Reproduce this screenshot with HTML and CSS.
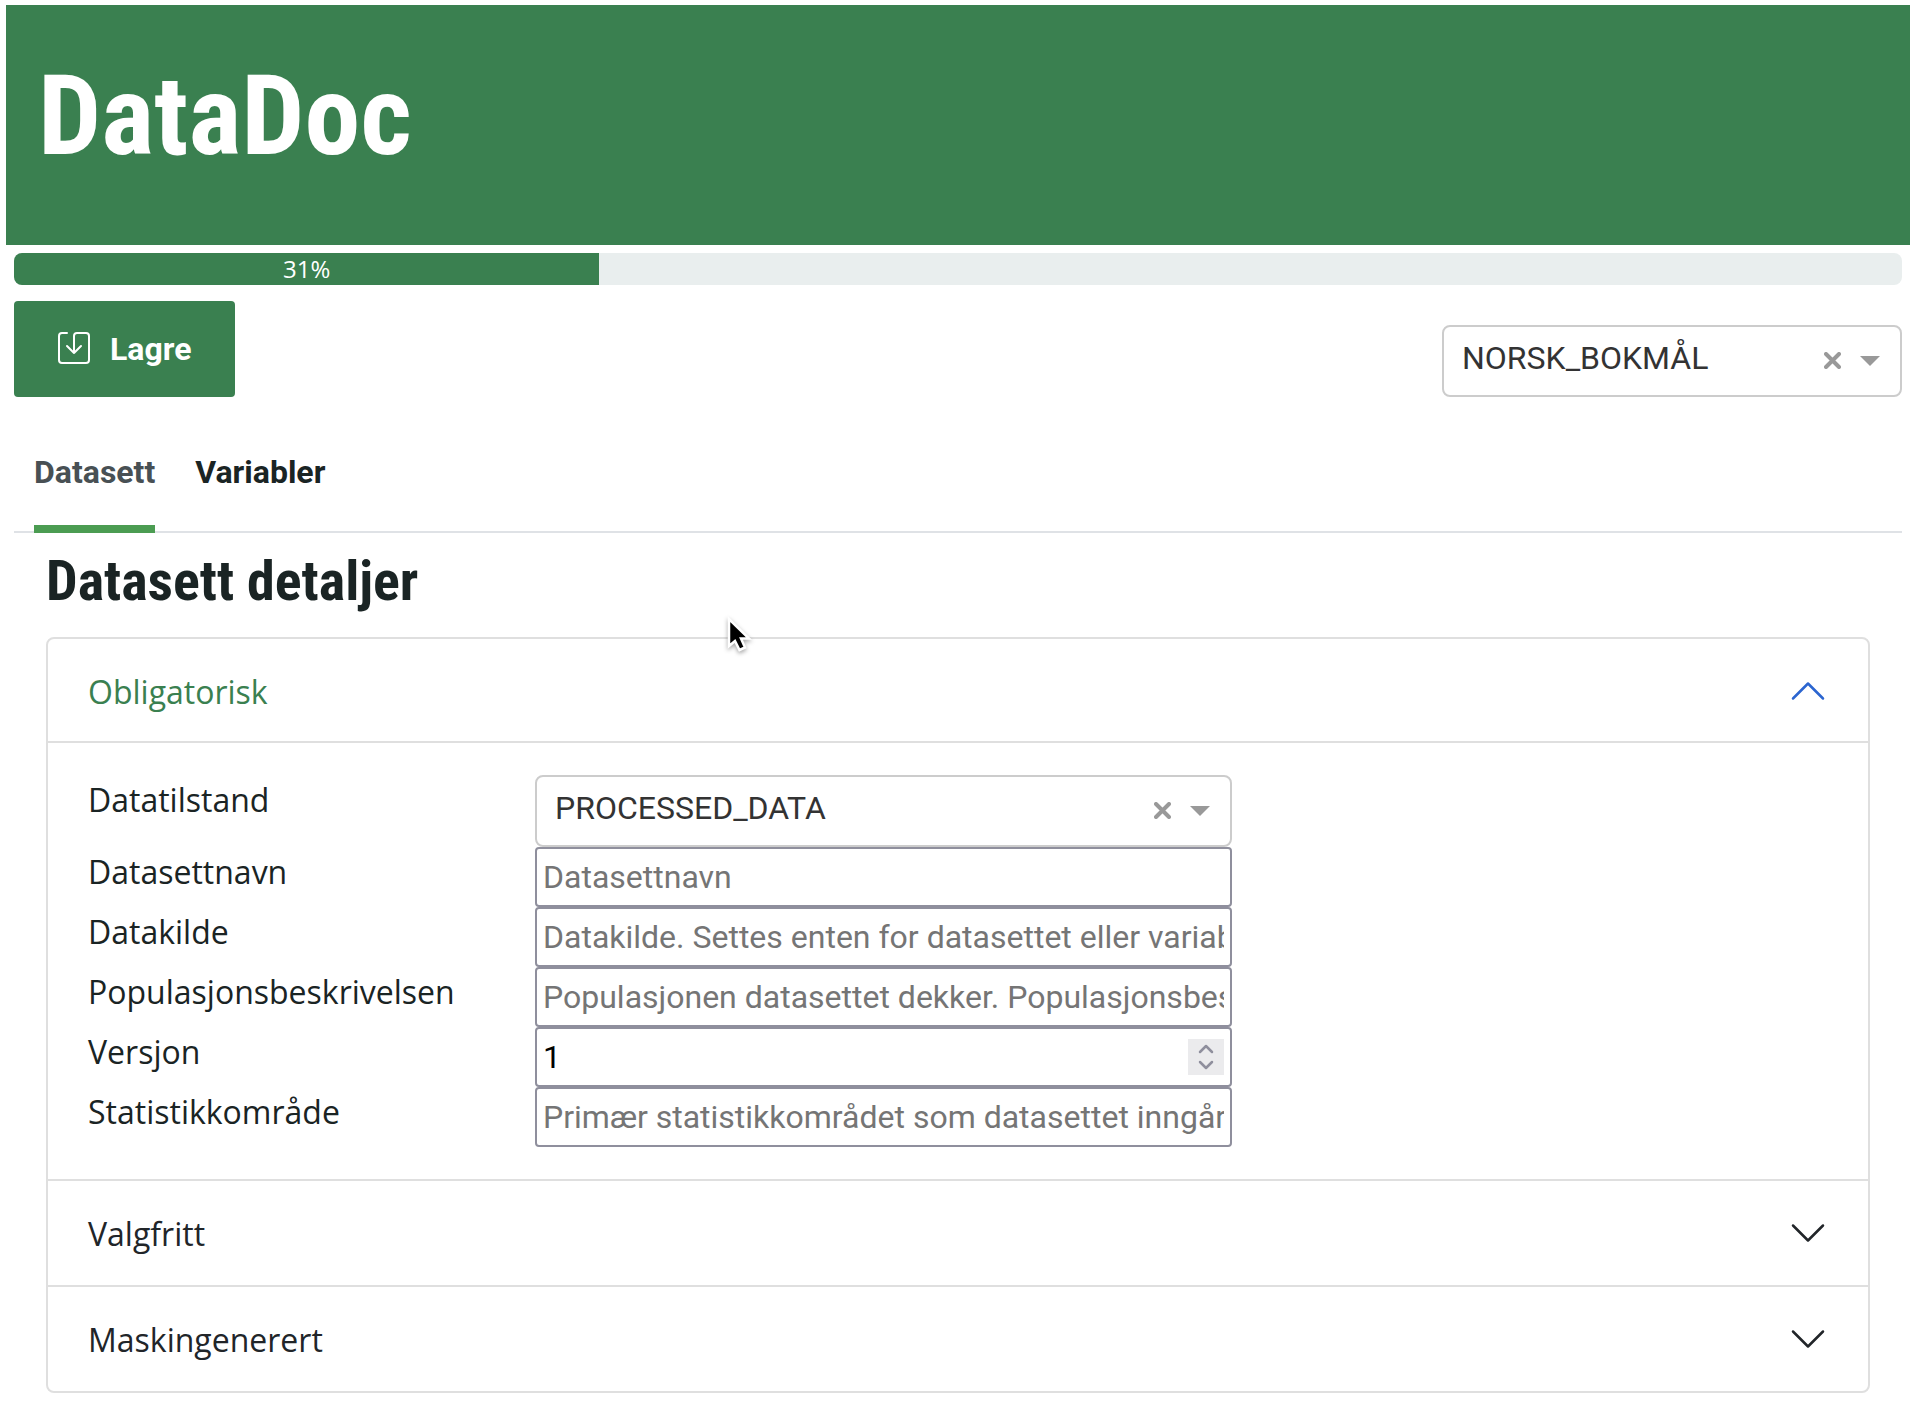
FILE: index.html
```html
<!DOCTYPE html>
<html lang="nb">
<head>
<meta charset="utf-8">
<title>DataDoc</title>
<link rel="stylesheet" href="styles.css">
</head>
<body>
<header class="banner"><h1 class="banner-title">DataDoc</h1></header>
<main class="content">
  <div class="progress"><div class="progress-bar" style="width: 31%">31%</div></div>

  <div class="toolbar">
    <button class="save" type="button">
      <svg class="save-icon" viewBox="0 0 32 32" fill="none" stroke="currentColor" stroke-width="2" stroke-linecap="round" stroke-linejoin="round"><path d="M9 1H4a3 3 0 0 0-3 3v24a3 3 0 0 0 3 3h24a3 3 0 0 0 3-3V4a3 3 0 0 0-3-3h-9a3 3 0 0 0-3 3v17M9 14l7 7 7-7"/></svg>
      <span>Lagre</span>
    </button>
    <div class="select language">
      <span class="select-value">NORSK_BOKMÅL</span>
      <svg class="clear" viewBox="0 0 17 17"><path d="M2 2l13 13M15 2L2 15"/></svg>
      <span class="caret"></span>
    </div>
  </div>

  <nav class="tabs">
    <a class="tab active">Datasett</a>
    <a class="tab">Variabler</a>
  </nav>

  <section class="details">
    <h2 class="details-title">Datasett detaljer</h2>
    <div class="accordion">
      <div class="item">
        <div class="item-head open"><span>Obligatorisk</span>
          <svg class="chevron" viewBox="0 0 16 16"><path d="M2 11l6-6 6 6"/></svg></div>
        <div class="item-body">
          <div class="row"><label class="label">Datatilstand</label>
            <div class="select field">
              <span class="select-value">PROCESSED_DATA</span>
              <svg class="clear" viewBox="0 0 17 17"><path d="M2 2l13 13M15 2L2 15"/></svg>
              <span class="caret"></span>
            </div></div>
          <div class="row"><label class="label">Datasettnavn</label>
            <input class="input field" type="text" placeholder="Datasettnavn"></div>
          <div class="row"><label class="label">Datakilde</label>
            <input class="input field" type="text" placeholder="Datakilde. Settes enten for datasettet eller variabelforekomst."></div>
          <div class="row"><label class="label">Populasjonsbeskrivelsen</label>
            <input class="input field" type="text" placeholder="Populasjonen datasettet dekker. Populasjonsbeskrivelsen"></div>
          <div class="row"><label class="label">Versjon</label>
            <div class="input field number"><span>1</span>
              <svg class="spinner" viewBox="0 0 36 36"><path d="M12 13l6-6 6 6M12 23l6 6 6-6"/></svg></div></div>
          <div class="row"><label class="label">Statistikkområde</label>
            <input class="input field" type="text" placeholder="Primær statistikkområdet som datasettet inngår i"></div>
        </div>
      </div>
      <div class="item">
        <div class="item-head"><span>Valgfritt</span>
          <svg class="chevron" viewBox="0 0 16 16"><path d="M2 5l6 6 6-6"/></svg></div>
      </div>
      <div class="item">
        <div class="item-head"><span>Maskingenerert</span>
          <svg class="chevron" viewBox="0 0 16 16"><path d="M2 5l6 6 6-6"/></svg></div>
      </div>
    </div>
  </section>
</main>
<svg class="cursor" viewBox="0 0 30 40"><path d="M4 3v27l6-5 4.500 9 5.500-2.500-4-9h8z"/></svg>
</body>
</html>
```
FILE: styles.css
```css
* { box-sizing: border-box; }

body {
  margin: 0;
  padding: 5px 14px 0 6px;
  background: #fff;
  color: #1a2424;
  font: 32px/48px "Open Sans", "Noto Sans", sans-serif;
}

.banner {
  height: 240px;
  padding: 45px 32px;
  background: #3a8050;
  color: #fff;
}

.banner-title,
.details-title {
  margin: 0;
  font-family: "Roboto Condensed", Roboto, sans-serif;
  font-stretch: 75%;
  font-weight: 700;
}

.banner-title { font-size: 112px; line-height: 132px; }

.content { padding: 8px 8px 0; }

.progress {
  height: 32px;
  border-radius: 8px;
  background: #e9eeee;
  overflow: hidden;
}

.progress-bar {
  height: 32px;
  background: #3a8050;
  color: #fff;
  font-size: 24px;
  line-height: 32px;
  text-align: center;
}

.toolbar {
  display: flex;
  justify-content: space-between;
  align-items: flex-end;
  padding-top: 16px;
}

.save {
  display: flex;
  align-items: center;
  gap: 20px;
  width: 221px;
  height: 96px;
  padding: 0 0 1px 44px;
  border: 0;
  border-radius: 4px;
  background: #3a8050;
  color: #fff;
  font: 700 32px/48px Roboto, sans-serif;
}

.save-icon { width: 32px; height: 32px; margin-bottom: 1px; }

.select {
  display: flex;
  align-items: center;
  height: 72px;
  padding: 0 20px 0 18px;
  border: 2px solid #ccc;
  border-radius: 8px;
  background: #fff;
  color: #333;
  font-family: Roboto, sans-serif;
}

.language { width: 460px; }
.select-value { flex: 1; padding-bottom: 6px; }
.clear { width: 17px; height: 17px; margin: 0 19px 2px 0; fill: none; stroke: #999; stroke-width: 4; stroke-linecap: round; }

.caret {
  border: 10px solid transparent;
  border-top-color: #999;
  border-bottom: 0;
}

.tabs {
  display: flex;
  gap: 40px;
  height: 136px;
  padding: 0 20px;
  border-bottom: 2px solid #dfe2e6;
}

.tab {
  height: 136px;
  padding-top: 51px;
  font: 700 32px/48px Roboto, sans-serif;
}

.tab.active { color: #485054; border-bottom: 8px solid #4b9c52; }

.details { padding: 15px 32px 0; }
.details-title { font-size: 56px; line-height: 67px; margin-bottom: 22px; }

.accordion { border: 2px solid #dfdfdf; border-radius: 8px; }
.item + .item { border-top: 2px solid #dfdfdf; }

.item-head {
  display: flex;
  align-items: center;
  justify-content: space-between;
  height: 104px;
  padding: 0 40px;
  color: #212529;
}

.item-head span { padding-top: 2px; }
.item-head.open { color: #3a8050; box-shadow: inset 0 -2px #dfdfdf; }

.chevron {
  width: 40px;
  height: 40px;
  fill: none;
  stroke: #212529;
  stroke-width: 1;
  stroke-linecap: round;
  stroke-linejoin: round;
}

.open .chevron { stroke: #2b65d0; }

.item-body { padding: 32px 40px; }
.row { display: flex; }
.label { width: 447px; padding-top: 1px; }
.field { width: 697px; }

.input {
  height: 60px;
  padding: 0 6px;
  border: 2px solid #8f8f9d;
  border-radius: 4px;
  background: #fff;
  color: #000;
  font: 32px/48px Roboto, sans-serif;
}

.input::placeholder { color: #757575; opacity: 1; }
.number { display: flex; align-items: center; justify-content: space-between; }

.spinner {
  width: 36px;
  height: 36px;
  background: #ebebed;
  fill: none;
  stroke: #8f8f9d;
  stroke-width: 2.5;
  stroke-linecap: round;
  stroke-linejoin: round;
}

.cursor {
  position: absolute;
  left: 725px;
  top: 616px;
  width: 30px;
  height: 40px;
  fill: #000;
  stroke: #fff;
  stroke-width: 2.5;
  filter: drop-shadow(0 2px 2px rgba(0, 0, 0, .35));
}
```
